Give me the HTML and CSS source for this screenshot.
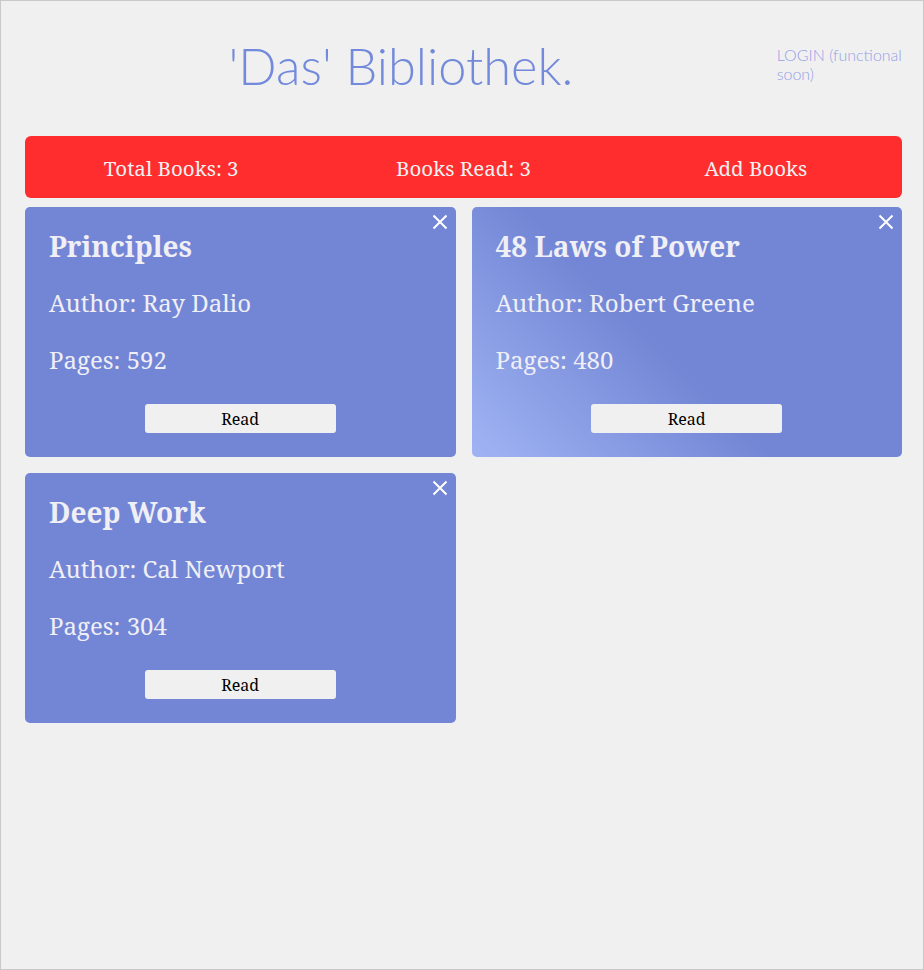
FILE: index.html
```html
<!DOCTYPE html>
<html lang="en">
<head>
<meta charset="utf-8">
<title>'Das' Bibliothek.</title>
<link rel="stylesheet" href="styles.css">
</head>
<body>
<div class="page">
  <header class="header">
    <div class="brand"><h1 class="title">'Das' Bibliothek.</h1></div>
    <div class="login">LOGIN (functional soon)</div>
  </header>
  <nav class="bar">
    <div class="bar-item">Total Books: 3</div>
    <div class="bar-item">Books Read: 3</div>
    <div class="bar-item">Add Books</div>
  </nav>
  <main class="grid">
    <article class="card">
      <button class="close" aria-label="Remove"><svg viewBox="0 0 16 16" width="16" height="16"><path d="M1.5 1.5 L14.5 14.5 M14.5 1.5 L1.5 14.5" /></svg></button>
      <h2 class="card-title">Principles</h2>
      <p class="card-line">Author: Ray Dalio</p>
      <p class="card-line">Pages: 592</p>
      <div class="actions"><button class="read">Read</button></div>
    </article>
    <article class="card card-hover">
      <button class="close" aria-label="Remove"><svg viewBox="0 0 16 16" width="16" height="16"><path d="M1.5 1.5 L14.5 14.5 M14.5 1.5 L1.5 14.5" /></svg></button>
      <h2 class="card-title">48 Laws of Power</h2>
      <p class="card-line">Author: Robert Greene</p>
      <p class="card-line">Pages: 480</p>
      <div class="actions"><button class="read">Read</button></div>
    </article>
    <article class="card">
      <button class="close" aria-label="Remove"><svg viewBox="0 0 16 16" width="16" height="16"><path d="M1.5 1.5 L14.5 14.5 M14.5 1.5 L1.5 14.5" /></svg></button>
      <h2 class="card-title">Deep Work</h2>
      <p class="card-line">Author: Cal Newport</p>
      <p class="card-line">Pages: 304</p>
      <div class="actions"><button class="read">Read</button></div>
    </article>
  </main>
</div>
</body>
</html>
```
FILE: styles.css
```css
* { box-sizing: border-box; }
html, body { margin: 0; padding: 0; background: #f0f0f0; }
.page {
  height: 970px;
  border: 1px solid #c9c9c9;
  padding: 0 21px 0 24px;
  font-family: "Noto Serif", "DejaVu Serif", serif;
}
.header {
  display: grid;
  grid-template-columns: 6fr 1fr;
  height: 135px;
  align-items: start;
}
.brand { text-align: center; padding-top: 35px; }
.title {
  margin: 0;
  font-family: Lato, sans-serif;
  font-weight: 300;
  font-size: 50.5px;
  line-height: 60px;
  color: #7389db;
}
.login {
  padding-top: 44px;
  font-family: Lato, sans-serif;
  font-weight: 300;
  font-size: 16px;
  line-height: 19px;
  color: #95a1e7;
}
.bar {
  display: grid;
  grid-template-columns: repeat(3, 1fr);
  height: 62px;
  padding-top: 1px;
  align-items: center;
  background: #ff2d2d;
  border-radius: 6px;
  color: #f1f1f1;
  font-size: 20.5px;
  text-align: center;
}
.grid {
  margin-top: 9px;
  display: grid;
  grid-template-columns: 1fr 1fr;
  gap: 16px;
}
.card {
  position: relative;
  height: 250px;
  padding: 19px 24px 24px;
  background: #7386d5;
  border-radius: 5px;
  color: #efeff5;
}
.card-hover {
  background: linear-gradient(45deg, #a0b4f4 0%, #7386d5 44%, #7386d5 100%);
}
.close {
  position: absolute;
  top: 7px;
  right: 8px;
  padding: 0;
  border: 0;
  background: none;
  width: 16px;
  height: 16px;
  line-height: 0;
}
.close svg path { stroke: #fff; stroke-width: 2; fill: none; }
.card-title {
  margin: 0 0 8px;
  font-size: 28px;
  line-height: 40px;
  font-weight: 700;
}
.card-line {
  margin: 0;
  font-size: 24px;
  line-height: 57px;
}
.actions {
  margin-top: 16px;
  display: flex;
  justify-content: center;
}
.read {
  width: 191px;
  height: 29px;
  border: 0;
  border-radius: 3px;
  background: #f0f0f0;
  font-family: "Noto Serif", "DejaVu Serif", serif;
  font-size: 16px;
  color: #000;
  padding: 0;
}
```
